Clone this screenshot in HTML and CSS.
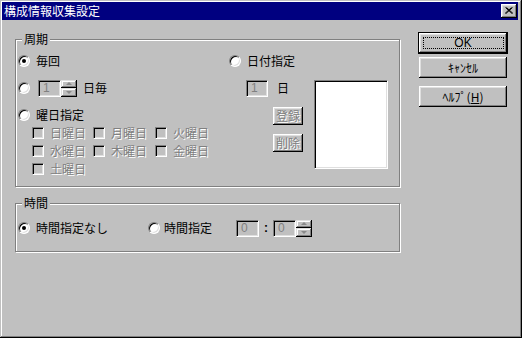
FILE: index.html
```html
<!DOCTYPE html>
<html lang="ja">
<head>
    <meta charset="UTF-8">
    <meta name="viewport" content="width=device-width, initial-scale=1.0">
    <link rel="stylesheet" href="styles.css">
    <title>構成情報収集設定</title>
</head>
<body>

    <div class="window">
        <div class="titlebar">
            <span class="title">構成情報収集設定</span>
            <span class="close-btn">
                <svg width="8" height="7" viewBox="0 0 8 7">
                    <path d="M0.5 0.5 L7 6.5 M1.5 0.5 L8 6.5 M6.5 0.5 L0 6.5 M7.5 0.5 L1 6.5" stroke="#000" stroke-width="1" fill="none"/>
                </svg>
            </span>
        </div>

        <div class="content">
            <div class="groups">
                <div class="group period">
                    <div class="group-title">周期</div>
                    <div class="period-body">
                        <div class="col col-a">
                            <div class="row">
                                <span class="radio checked"></span>
                                <span class="label">毎回</span>
                            </div>
                            <div class="row row-gap">
                                <span class="radio"></span>
                                <span class="edit edit-days">1</span>
                                <span class="spin"><span class="spin-up"></span><span class="spin-down"></span></span>
                                <span class="label unit">日毎</span>
                            </div>
                            <div class="row row-gap">
                                <span class="radio"></span>
                                <span class="label">曜日指定</span>
                            </div>
                            <div class="weekdays">
                                <div class="check"><span class="checkbox"></span><span class="label disabled">日曜日</span></div>
                                <div class="check"><span class="checkbox"></span><span class="label disabled">月曜日</span></div>
                                <div class="check"><span class="checkbox"></span><span class="label disabled">火曜日</span></div>
                                <div class="check"><span class="checkbox"></span><span class="label disabled">水曜日</span></div>
                                <div class="check"><span class="checkbox"></span><span class="label disabled">木曜日</span></div>
                                <div class="check"><span class="checkbox"></span><span class="label disabled">金曜日</span></div>
                                <div class="check"><span class="checkbox"></span><span class="label disabled">土曜日</span></div>
                            </div>
                        </div>

                        <div class="col col-b">
                            <div class="row">
                                <span class="radio"></span>
                                <span class="label">日付指定</span>
                            </div>
                            <div class="row row-gap date-row">
                                <span class="edit edit-date">1</span>
                                <span class="label day">日</span>
                            </div>
                            <div class="small-btn first">登録</div>
                            <div class="small-btn">削除</div>
                        </div>

                        <div class="listbox"></div>
                    </div>
                </div>

                <div class="group time">
                    <div class="group-title">時間</div>
                    <div class="row time-row">
                        <div class="option opt-none">
                            <span class="radio checked"></span>
                            <span class="label">時間指定なし</span>
                        </div>
                        <div class="option opt-time">
                            <span class="radio"></span>
                            <span class="label">時間指定</span>
                        </div>
                        <span class="edit edit-time">0</span>
                        <span class="colon">:</span>
                        <span class="edit edit-time">0</span>
                        <span class="spin"><span class="spin-up"></span><span class="spin-down"></span></span>
                    </div>
                </div>
            </div>

            <div class="buttons">
                <div class="btn btn-default"><span class="focus">OK</span></div>
                <div class="btn btn-cancel">ｷｬﾝｾﾙ</div>
                <div class="btn btn-help">ﾍﾙﾌﾟ(<u>H</u>)</div>
            </div>
        </div>
    </div>

</body>
</html>
```

FILE: styles.css
```css
* {
    box-sizing: border-box;
}

body {
    margin: 0;
    background-color: #c0c0c0;
    font-family: "Noto Sans CJK JP", sans-serif;
    font-size: 12px;
    color: #000;
}

.window {
    width: 522px;
    height: 338px;
    padding: 2px 4px 0 2px;
    background-color: #c0c0c0;
    box-shadow: inset -1px -1px #000, inset 1px 1px #c0c0c0, inset -2px -2px #808080, inset 2px 2px #fff;
}

.titlebar {
    height: 18px;
    padding: 0 1px 0 2px;
    display: flex;
    align-items: center;
    justify-content: space-between;
    background-color: #000080;
}

.title {
    color: #fff;
    line-height: 14px;
}

.close-btn {
    width: 16px;
    height: 14px;
    display: flex;
    align-items: center;
    justify-content: center;
    background-color: #c0c0c0;
    box-shadow: inset -1px -1px #000, inset 1px 1px #fff, inset -2px -2px #808080, inset 2px 2px #dfdfdf;
}

.close-btn svg {
    display: block;
    margin-top: -1px;
}

.content {
    display: flex;
    padding-left: 13px;
}

.groups {
    width: 385px;
    padding-top: 19px;
}

.group {
    border: 1px solid #808080;
    box-shadow: inset 1px 1px #fff, 1px 1px #fff;
}

.group.period {
    height: 148px;
}

.group.time {
    height: 49px;
    margin-top: 16px;
}

.group-title {
    width: fit-content;
    height: 14px;
    line-height: 14px;
    margin: -8px 0 0 6px;
    padding: 0 2px;
    background-color: #c0c0c0;
}

.period-body {
    display: flex;
    margin-top: 6px;
    padding-left: 2px;
}

.col-a {
    width: 211px;
}

.col-b {
    width: 85px;
}

.row {
    display: flex;
    align-items: center;
    height: 18px;
}

.row-gap {
    margin-top: 9px;
}

.label {
    margin-left: 6px;
    line-height: 14px;
    white-space: nowrap;
}

.label.disabled {
    color: #808080;
    text-shadow: 1px 1px 0 #fff;
}

.radio {
    position: relative;
    flex: none;
    width: 12px;
    height: 12px;
    border-radius: 50%;
    border: 1px solid;
    border-color: #808080 #fff #fff #808080;
    background-color: #fff;
    box-shadow: inset 1px 1px #000, inset -1px -1px #dfdfdf;
}

.radio.checked::after {
    content: "";
    position: absolute;
    left: 3px;
    top: 3px;
    width: 4px;
    height: 4px;
    border-radius: 50%;
    background-color: #000;
}

.checkbox {
    flex: none;
    width: 12px;
    height: 12px;
    border: 1px solid;
    border-color: #808080 #fff #fff #808080;
    background-color: #c0c0c0;
    box-shadow: inset 1px 1px #000, inset -1px -1px #dfdfdf;
}

.edit {
    flex: none;
    height: 17px;
    padding-left: 4px;
    border: 1px solid;
    border-color: #808080 #fff #fff #808080;
    background-color: #c0c0c0;
    box-shadow: inset 1px 1px #000, inset -1px -1px #dfdfdf;
    color: #808080;
    font-family: "Liberation Sans", sans-serif;
    font-size: 12px;
    line-height: 15px;
}

.edit-days {
    width: 23px;
    margin-left: 8px;
}

.edit-date {
    width: 22px;
}

.edit-time {
    width: 23px;
}

.spin {
    flex: none;
    display: flex;
    flex-direction: column;
    width: 16px;
    height: 17px;
}

.spin-up,
.spin-down {
    flex: 1;
    display: flex;
    align-items: center;
    justify-content: center;
    background-color: #c0c0c0;
    box-shadow: inset -1px -1px #000, inset 1px 1px #dfdfdf, inset -2px -2px #808080, inset 2px 2px #fff;
}

.spin-up::before,
.spin-down::before {
    content: "";
    width: 0;
    height: 0;
    border-left: 3px solid transparent;
    border-right: 3px solid transparent;
}

.spin-up::before {
    border-bottom: 3px solid #8a8a8a;
}

.spin-down::before {
    border-top: 3px solid #8a8a8a;
}

.label.unit {
    margin-left: 6px;
}

.weekdays {
    display: grid;
    grid-template-columns: 61px 62px 80px;
    grid-auto-rows: 18px;
    padding-left: 14px;
}

.check {
    display: flex;
    align-items: center;
}

.date-row {
    padding-left: 17px;
}

.label.day {
    margin-left: 9px;
}

.small-btn {
    width: 30px;
    height: 18px;
    margin: 9px 0 0 44px;
    display: flex;
    align-items: center;
    justify-content: center;
    color: #808080;
    text-shadow: 1px 1px 0 #fff;
    line-height: 14px;
    box-shadow: inset -1px -1px #000, inset 1px 1px #fff, inset -2px -2px #808080, inset 2px 2px #dfdfdf;
}

.small-btn.first {
    margin-top: 10px;
}

.listbox {
    width: 74px;
    height: 89px;
    margin-top: 28px;
    border: 1px solid;
    border-color: #808080 #fff #fff #808080;
    background-color: #fff;
    box-shadow: inset 1px 1px #000, inset -1px -1px #dfdfdf;
}

.time-row {
    margin-top: 9px;
    padding-left: 2px;
}

.option {
    display: flex;
    align-items: center;
}

.opt-none {
    width: 130px;
}

.opt-time {
    width: 88px;
}

.opt-time .label {
    margin-left: 4px;
}

.colon {
    width: 14px;
    text-align: center;
    font-family: "Liberation Sans", sans-serif;
    font-weight: bold;
    line-height: 14px;
}

.buttons {
    display: flex;
    flex-direction: column;
    align-items: flex-start;
    margin-left: 18px;
    padding-top: 12px;
}

.btn {
    display: flex;
    align-items: center;
    justify-content: center;
    width: 88px;
    height: 21px;
    margin-left: 1px;
    line-height: 14px;
    box-shadow: inset -1px -1px #000, inset 1px 1px #fff, inset -2px -2px #808080, inset 2px 2px #dfdfdf;
}

.btn-default {
    width: 90px;
    height: 22px;
    margin-left: 0;
    border: 1px solid #000;
}

.btn-cancel {
    margin-top: 3px;
}

.btn-help {
    margin-top: 8px;
}

.focus {
    width: 81px;
    height: 12px;
    display: flex;
    align-items: center;
    justify-content: center;
    border: 1px dotted #000;
    font-family: "Liberation Sans", sans-serif;
}
```
